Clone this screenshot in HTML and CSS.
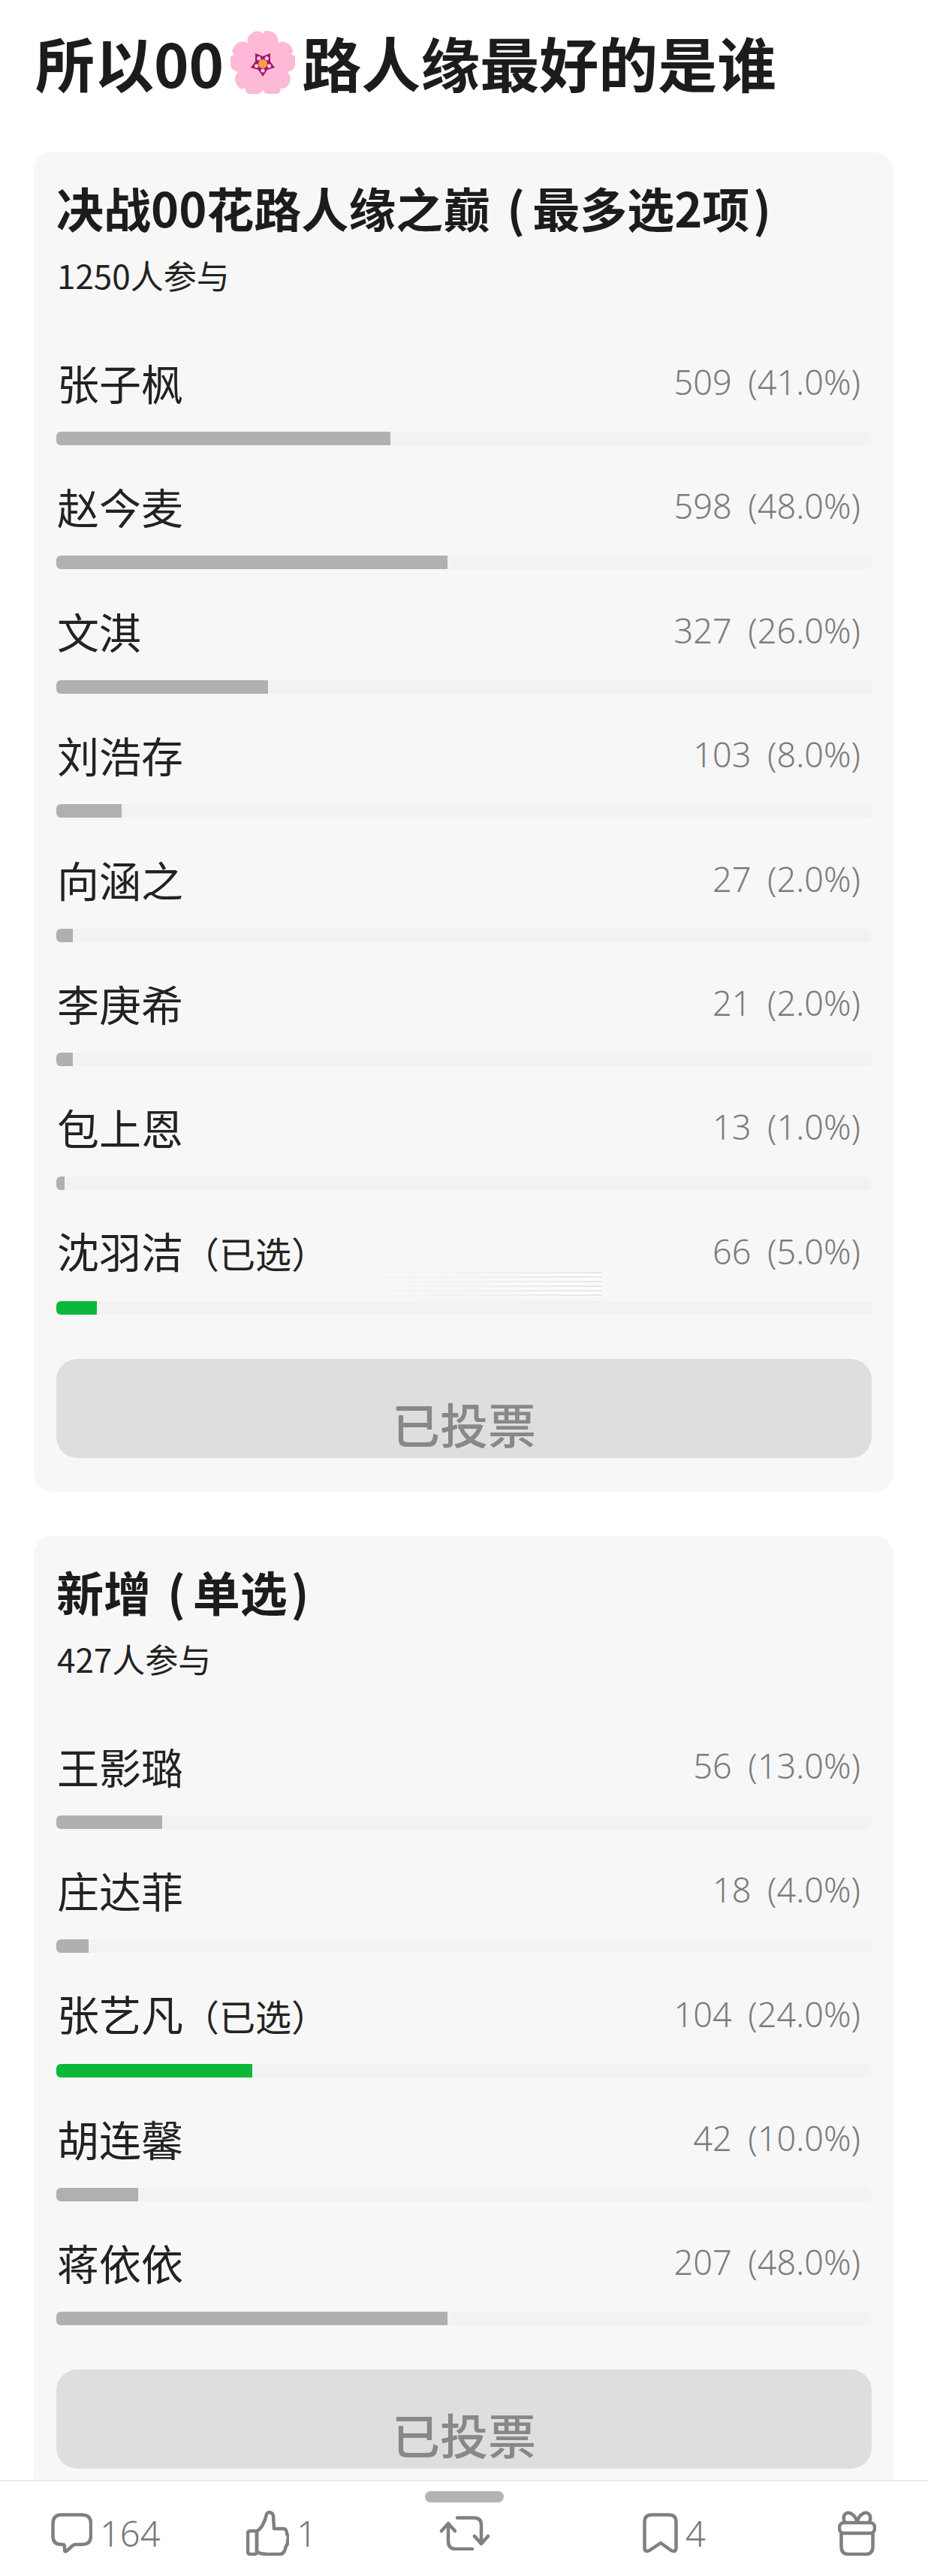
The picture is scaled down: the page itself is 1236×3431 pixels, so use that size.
FILE: index.html
```html
<!DOCTYPE html>
<html lang="zh-CN">
<head>
    <meta charset="UTF-8">
    <meta name="viewport" content="width=device-width, initial-scale=1.0">
    <title>所以00花路人缘最好的是谁</title>
    <link rel="stylesheet" href="styles.css">
</head>
<body>
<div class="page">
    <div class="content">
        <h1 class="post-title">所以00<svg class="flower" viewBox="0 0 86 84" role="img" aria-label="樱花">
            <g transform="translate(43 44)" fill="#fdb9d5">
                <path id="petal" d="M0 -6 C-10 -12 -23 -22 -20 -34 C-17 -42 -8 -45 -3 -43 L0 -40 L3 -44 C10 -45 18 -41 20 -34 C23 -22 10 -12 0 -6Z"/>
                <use href="#petal" transform="rotate(72)"/>
                <use href="#petal" transform="rotate(144)"/>
                <use href="#petal" transform="rotate(216)"/>
                <use href="#petal" transform="rotate(288)"/>
                <polygon fill="#a2156e" points="0,17 -6,8 -16,5 -10,-3 -10,-14 0,-10 10,-14 10,-3 16,5 6,8"/>
                <circle cx="0" cy="0" r="6" fill="#f4a044"/>
                <g fill="#fcc6dc">
                    <circle cx="0" cy="9" r="2.6"/>
                    <circle cx="-8.5" cy="2.8" r="2.6"/>
                    <circle cx="8.5" cy="2.8" r="2.6"/>
                    <circle cx="-5.3" cy="-7.3" r="2.6"/>
                    <circle cx="5.3" cy="-7.3" r="2.6"/>
                </g>
            </g>
        </svg>路人缘最好的是谁</h1>

        <section class="poll">
            <h2 class="poll-title">决战00花路人缘之巅<span class="paren-open">(</span>最多选2项<span class="paren-close">)</span></h2>
            <p class="poll-count">1250人参与</p>
            <div class="options">
                <div class="option">
                    <div class="option-head"><span class="option-name">张子枫</span><span class="option-value">509 (41.0%)</span></div>
                    <div class="track"><div class="fill" style="width:41%"></div></div>
                </div>
                <div class="option">
                    <div class="option-head"><span class="option-name">赵今麦</span><span class="option-value">598 (48.0%)</span></div>
                    <div class="track"><div class="fill" style="width:48%"></div></div>
                </div>
                <div class="option">
                    <div class="option-head"><span class="option-name">文淇</span><span class="option-value">327 (26.0%)</span></div>
                    <div class="track"><div class="fill" style="width:26%"></div></div>
                </div>
                <div class="option">
                    <div class="option-head"><span class="option-name">刘浩存</span><span class="option-value">103 (8.0%)</span></div>
                    <div class="track"><div class="fill" style="width:8%"></div></div>
                </div>
                <div class="option">
                    <div class="option-head"><span class="option-name">向涵之</span><span class="option-value">27 (2.0%)</span></div>
                    <div class="track"><div class="fill" style="width:2%"></div></div>
                </div>
                <div class="option">
                    <div class="option-head"><span class="option-name">李庚希</span><span class="option-value">21 (2.0%)</span></div>
                    <div class="track"><div class="fill" style="width:2%"></div></div>
                </div>
                <div class="option">
                    <div class="option-head"><span class="option-name">包上恩</span><span class="option-value">13 (1.0%)</span></div>
                    <div class="track"><div class="fill" style="width:1%"></div></div>
                </div>
                <div class="option">
                    <div class="option-head"><span class="option-name">沈羽洁<span class="picked">（已选）</span></span><span class="option-value">66 (5.0%)</span></div>
                    <div class="smear"></div>
                    <div class="track"><div class="fill fill-picked" style="width:5%"></div></div>
                </div>
            </div>
            <div class="vote-btn">已投票</div>
        </section>

        <section class="poll">
            <h2 class="poll-title">新增<span class="paren-open">(</span>单选<span class="paren-close">)</span></h2>
            <p class="poll-count">427人参与</p>
            <div class="options">
                <div class="option">
                    <div class="option-head"><span class="option-name">王影璐</span><span class="option-value">56 (13.0%)</span></div>
                    <div class="track"><div class="fill" style="width:13%"></div></div>
                </div>
                <div class="option">
                    <div class="option-head"><span class="option-name">庄达菲</span><span class="option-value">18 (4.0%)</span></div>
                    <div class="track"><div class="fill" style="width:4%"></div></div>
                </div>
                <div class="option">
                    <div class="option-head"><span class="option-name">张艺凡<span class="picked">（已选）</span></span><span class="option-value">104 (24.0%)</span></div>
                    <div class="track"><div class="fill fill-picked" style="width:24%"></div></div>
                </div>
                <div class="option">
                    <div class="option-head"><span class="option-name">胡连馨</span><span class="option-value">42 (10.0%)</span></div>
                    <div class="track"><div class="fill" style="width:10%"></div></div>
                </div>
                <div class="option">
                    <div class="option-head"><span class="option-name">蒋依依</span><span class="option-value">207 (48.0%)</span></div>
                    <div class="track"><div class="fill" style="width:48%"></div></div>
                </div>
            </div>
            <div class="vote-btn">已投票</div>
        </section>
    </div>

    <div class="toolbar">
        <div class="handle"></div>
        <div class="actions">
            <div class="action">
                <svg class="icon" width="55" height="54" viewBox="0 0 55 54"><path d="M14 2.500H41Q53 2.500 53 14V31Q53 42 41 42H33Q30 42 28 44L21 50.500Q18 52.500 18 49.500V45Q18 42 15 42H14Q2.500 42 2.500 31V14Q2.500 2.500 14 2.500Z"/></svg>
                <span>164</span>
            </div>
            <div class="action">
                <svg class="icon" width="57" height="60" viewBox="0 0 57 60"><path d="M14 27C20 25 25 14 27 5C28 1 35 1 36 7L37 24H49C54 24 54 28 54 31C57 34 56 38 55 39C56 43 54 46 53 47C52 52 50 58 45 58H28C22 58 18 57 14 55Z"/><rect x="2" y="27" width="12" height="31" rx="3"/></svg>
                <span>1</span>
            </div>
            <div class="action">
                <svg class="icon" width="68" height="46" viewBox="0 0 68 46"><path d="M3 20L12 10L21 20M12 10V34Q12 44 22 44H44M24 2.500H46Q56 2.500 56 12V37M47 27L56 37L65 27"/></svg>
            </div>
            <div class="action">
                <svg class="icon" width="47" height="54" viewBox="0 0 47 54"><path d="M12 2.500H35Q44.500 2.500 44.500 12V46Q44.500 53 38 50L24 40L9 50Q2.500 53 2.500 46V12Q2.500 2.500 12 2.500Z"/></svg>
                <span>4</span>
            </div>
            <div class="action">
                <svg class="icon" width="51" height="60" viewBox="0 0 51 60"><path d="M25.500 15C23 6 17 2 12 3C7 5 7 11 9 15M25.500 15C28 6 34 2 39 3C44 5 44 11 42 15"/><rect x="2" y="16" width="47" height="14" rx="6"/><path d="M4.500 30V48Q4.500 58 14 58H37Q46.500 58 46.500 48V30"/></svg>
            </div>
        </div>
    </div>
</div>
</body>
</html>
```

FILE: styles.css
```css
* {
    box-sizing: border-box;
}

body {
    margin: 0;
    background: #fff;
    color: #1c1c1c;
    font-family: "Noto Sans CJK SC", "Noto Sans", sans-serif;
}

.page {
    display: flex;
    flex-direction: column;
    height: 3431px;
    overflow: hidden;
}

.content {
    flex: 1;
    min-height: 0;
    overflow: hidden;
    padding: 33px 46px 0 45px;
}

.post-title {
    display: flex;
    align-items: center;
    height: 100px;
    margin: 0 0 70px;
    padding-left: 2px;
    font-size: 79px;
    font-weight: 700;
    line-height: 100px;
    white-space: nowrap;
}

.flower {
    flex: none;
    width: 86px;
    height: 84px;
    margin: 0 9px 0 9px;
}

.poll {
    margin-bottom: 59px;
    padding: 33px 29px 45px 30px;
    background: #f7f7f7;
    border-radius: 24px;
}

.poll-title {
    margin: 0;
    font-size: 63px;
    font-weight: 700;
    line-height: 80px;
    white-space: nowrap;
}

.paren-open {
    margin: 0 10px 0 22px;
}

.paren-close {
    margin-left: 5px;
}

.poll-count {
    margin: 20px 0 85px;
    padding-left: 1px;
    font-size: 44px;
    line-height: 60px;
    color: #222;
}

.options {
    display: flex;
    flex-direction: column;
    gap: 53.4px;
}

.option {
    position: relative;
}

.option-head {
    display: flex;
    justify-content: space-between;
    align-items: center;
    height: 56px;
    margin-bottom: 38px;
}

.option-name {
    padding-left: 1px;
    font-size: 56px;
    line-height: 64px;
    color: #222;
}

.picked {
    font-size: 48px;
}

.option-value {
    padding-right: 15px;
    font-size: 45px;
    font-family: "Noto Sans", "Noto Sans CJK SC", sans-serif;
    font-weight: 300;
    line-height: 66px;
    word-spacing: 10px;
    color: #7c7c7c;
}

.track {
    height: 18px;
    background: #f2f2f2;
    border-radius: 6px;
    overflow: hidden;
}

.fill {
    height: 100%;
    background: #b0b0b0;
}

.fill-picked {
    background: #0bb83a;
}

/* faint leftover smudge over the last row */
.smear {
    position: absolute;
    top: 55px;
    left: 355px;
    width: 372px;
    height: 33px;
    background:
        repeating-linear-gradient(to bottom, rgba(205, 205, 205, 0.4) 0 2px, rgba(255, 255, 255, 0.6) 2px 6px);
    -webkit-mask-image: linear-gradient(to right, transparent 10%, rgba(0, 0, 0, 0.4) 60%, #000 100%);
    mask-image: linear-gradient(to right, transparent 10%, rgba(0, 0, 0, 0.4) 60%, #000 100%);
}

.vote-btn {
    height: 132px;
    margin-top: 59px;
    padding-top: 49px;
    background: #dedede;
    border-radius: 28px;
    font-size: 64px;
    font-weight: 500;
    line-height: 72px;
    text-align: center;
    color: #888;
}

.toolbar {
    flex: none;
    height: 128px;
    padding-top: 13px;
    background: #fff;
    border-top: 2px solid #e8e8e8;
}

.handle {
    width: 105px;
    height: 15px;
    margin: 0 auto;
    background: #b3b3b3;
    border-radius: 8px;
}

.actions {
    display: grid;
    grid-template-columns: 260px 257px 271px 260px auto;
    align-items: center;
    height: 62px;
    margin-top: 10px;
    padding-left: 68px;
}

.action {
    display: flex;
    align-items: center;
    gap: 10px;
    font-size: 47px;
    font-family: "Noto Sans", "Noto Sans CJK SC", sans-serif;
    font-weight: 300;
    line-height: 60px;
    color: #777;
}

.icon {
    flex: none;
    fill: none;
    stroke: #808080;
    stroke-width: 4.5;
    stroke-linecap: round;
    stroke-linejoin: round;
}
```
